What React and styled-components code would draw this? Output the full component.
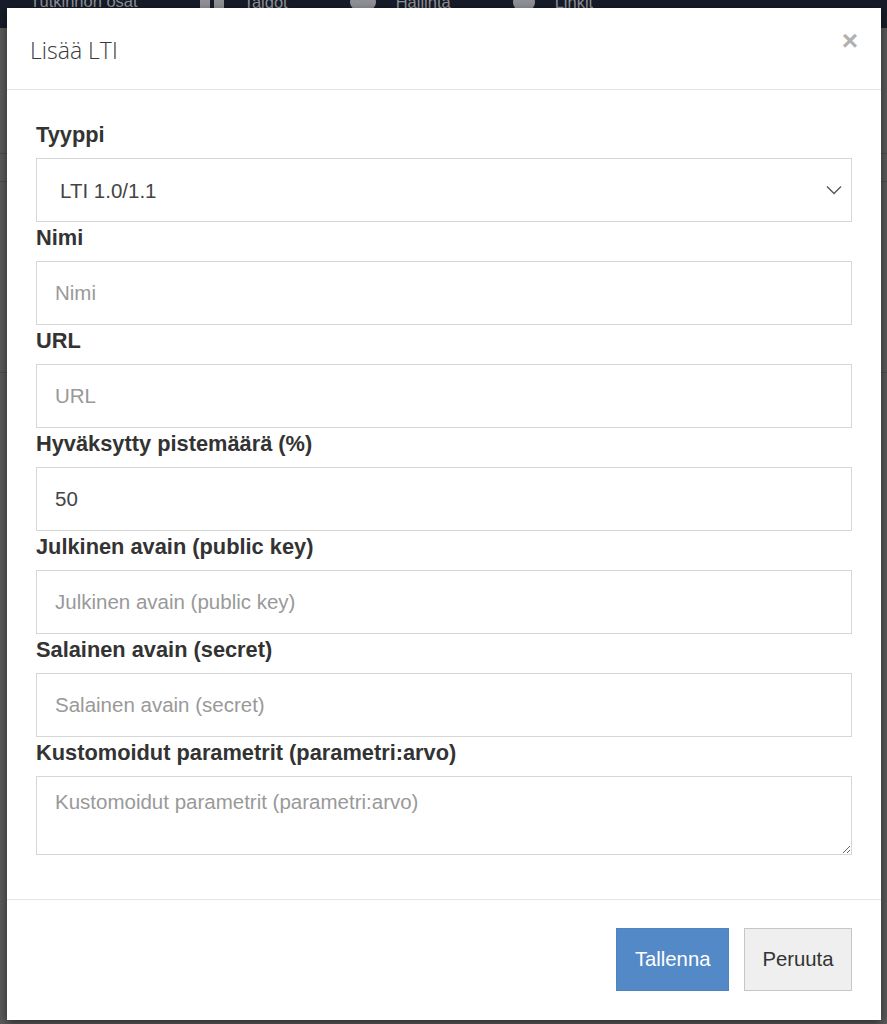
import styled, { createGlobalStyle } from "styled-components";

const GlobalStyle = createGlobalStyle`
  html, body {
    margin: 0;
    padding: 0;
    background: #5a5a5a;
    font-family: "Liberation Sans", Arial, sans-serif;
  }
  * {
    box-sizing: border-box;
  }
`;

const Page = styled.div`
  position: relative;
  min-height: 1024px;
  overflow: hidden;
`;

const Navbar = styled.div`
  height: 28px;
  background: #161c29;
  display: flex;
  align-items: flex-start;
  padding-left: 30px;
  gap: 62px;
  overflow: hidden;
`;

const NavItem = styled.div`
  display: flex;
  align-items: center;
  gap: 20px;
  margin-top: -8px;
  font-size: 16.5px;
  line-height: 19px;
  color: #8f9196;
  white-space: nowrap;
`;

const NavIcon = styled.span`
  display: inline-block;
  width: ${(p) => p.w}px;
  height: 20px;
  border-radius: ${(p) => (p.round ? "50%" : "1px")};
  background: ${(p) =>
    p.round ? "#8f9196" : "linear-gradient(90deg, #8f9196 0 40%, transparent 40% 60%, #8f9196 60% 100%)"};
`;

const BackdropRow = styled.div`
  height: ${(p) => p.h}px;
  border-bottom: 1px solid #4c4c4c;
`;

const Modal = styled.div`
  position: absolute;
  top: 8px;
  left: 7px;
  width: 874px;
  height: 1012px;
  background: #fff;
  box-shadow: 0 3px 9px rgba(0, 0, 0, 0.5);
  display: flex;
  flex-direction: column;
`;

const Header = styled.div`
  height: 82px;
  border-bottom: 1px solid #e5e5e5;
  display: flex;
  align-items: center;
  justify-content: space-between;
  padding: 0 23px 0 23px;
`;

const Title = styled.h4`
  margin: 0;
  font-family: "Open Sans", sans-serif;
  font-weight: 300;
  font-size: 23px;
  color: #3a3a3a;
  padding-top: 2px;
`;

const Close = styled.button`
  border: none;
  background: none;
  padding: 0;
  margin-top: -15px;
  font-family: "Liberation Sans", Arial, sans-serif;
  font-size: 28px;
  font-weight: 700;
  line-height: 1;
  color: #b1b1b1;
  cursor: pointer;
`;

const Body = styled.div`
  flex: 1;
  padding: 29px 29px 0 29px;
`;

const Label = styled.label`
  display: block;
  margin: 4px 0 11px;
  font-size: 21.8px;
  font-weight: 700;
  line-height: 24px;
  color: #333;
`;

const fieldBase = `
  display: block;
  width: 100%;
  border: 1.5px solid #d6d6d6;
  background: #fff;
  font-family: "Liberation Sans", Arial, sans-serif;
  font-size: 20.5px;
  color: #444;
  outline: none;
  &::placeholder {
    color: #999;
  }
`;

const Input = styled.input`
  ${fieldBase}
  height: 64px;
  padding: 0 18px;
`;

const SelectWrap = styled.div`
  position: relative;
`;

const Select = styled.select`
  ${fieldBase}
  height: 64px;
  padding: 0 23px;
  appearance: none;
`;

const Chevron = styled.svg`
  position: absolute;
  right: 10px;
  top: 27px;
  pointer-events: none;
`;

const TextArea = styled.textarea`
  ${fieldBase}
  height: 79px;
  padding: 13px 18px;
  resize: vertical;
`;

const Footer = styled.div`
  border-top: 1px solid #e5e5e5;
  padding: 28px 29px 29px;
  display: flex;
  justify-content: flex-end;
  gap: 15px;
`;

const Button = styled.button`
  height: 63px;
  padding: 0 17.5px;
  font-family: "Liberation Sans", Arial, sans-serif;
  font-size: 20.3px;
  border-radius: 0;
  cursor: pointer;
  background: ${(p) => (p.primary ? "#5389c6" : "#efefef")};
  color: ${(p) => (p.primary ? "#fff" : "#333")};
  border: 1.5px solid ${(p) => (p.primary ? "#4f84c0" : "#c6c6c6")};
`;

const fields = [
  { label: "Nimi", placeholder: "Nimi" },
  { label: "URL", placeholder: "URL" },
  { label: "Hyväksytty pistemäärä (%)", value: "50" },
  { label: "Julkinen avain (public key)", placeholder: "Julkinen avain (public key)" },
  { label: "Salainen avain (secret)", placeholder: "Salainen avain (secret)" },
];

export default function App() {
  return (
    <Page>
      <GlobalStyle />
      <Navbar>
        <NavItem>Tutkinnon osat</NavItem>
        <NavItem>
          <NavIcon w={24} />
          Taidot
        </NavItem>
        <NavItem>
          <NavIcon w={26} round />
          Hallinta
        </NavItem>
        <NavItem>
          <NavIcon w={22} round />
          Linkit
        </NavItem>
      </Navbar>
      <BackdropRow h={126} />
      <BackdropRow h={28} />
      <BackdropRow h={191} />

      <Modal>
        <Header>
          <Title>Lisää LTI</Title>
          <Close aria-label="Sulje">×</Close>
        </Header>
        <Body>
          <Label>Tyyppi</Label>
          <SelectWrap>
            <Select defaultValue="lti1">
              <option value="lti1">LTI 1.0/1.1</option>
            </Select>
            <Chevron width="16" height="10" viewBox="0 0 16 10">
              <path d="M1 1.5 L8 8.5 L15 1.5" fill="none" stroke="#555" strokeWidth="1.3" />
            </Chevron>
          </SelectWrap>
          {fields.map((f) => (
            <div key={f.label}>
              <Label>{f.label}</Label>
              <Input placeholder={f.placeholder} defaultValue={f.value} />
            </div>
          ))}
          <Label>Kustomoidut parametrit (parametri:arvo)</Label>
          <TextArea placeholder="Kustomoidut parametrit (parametri:arvo)" />
        </Body>
        <Footer>
          <Button primary>Tallenna</Button>
          <Button>Peruuta</Button>
        </Footer>
      </Modal>
    </Page>
  );
}
